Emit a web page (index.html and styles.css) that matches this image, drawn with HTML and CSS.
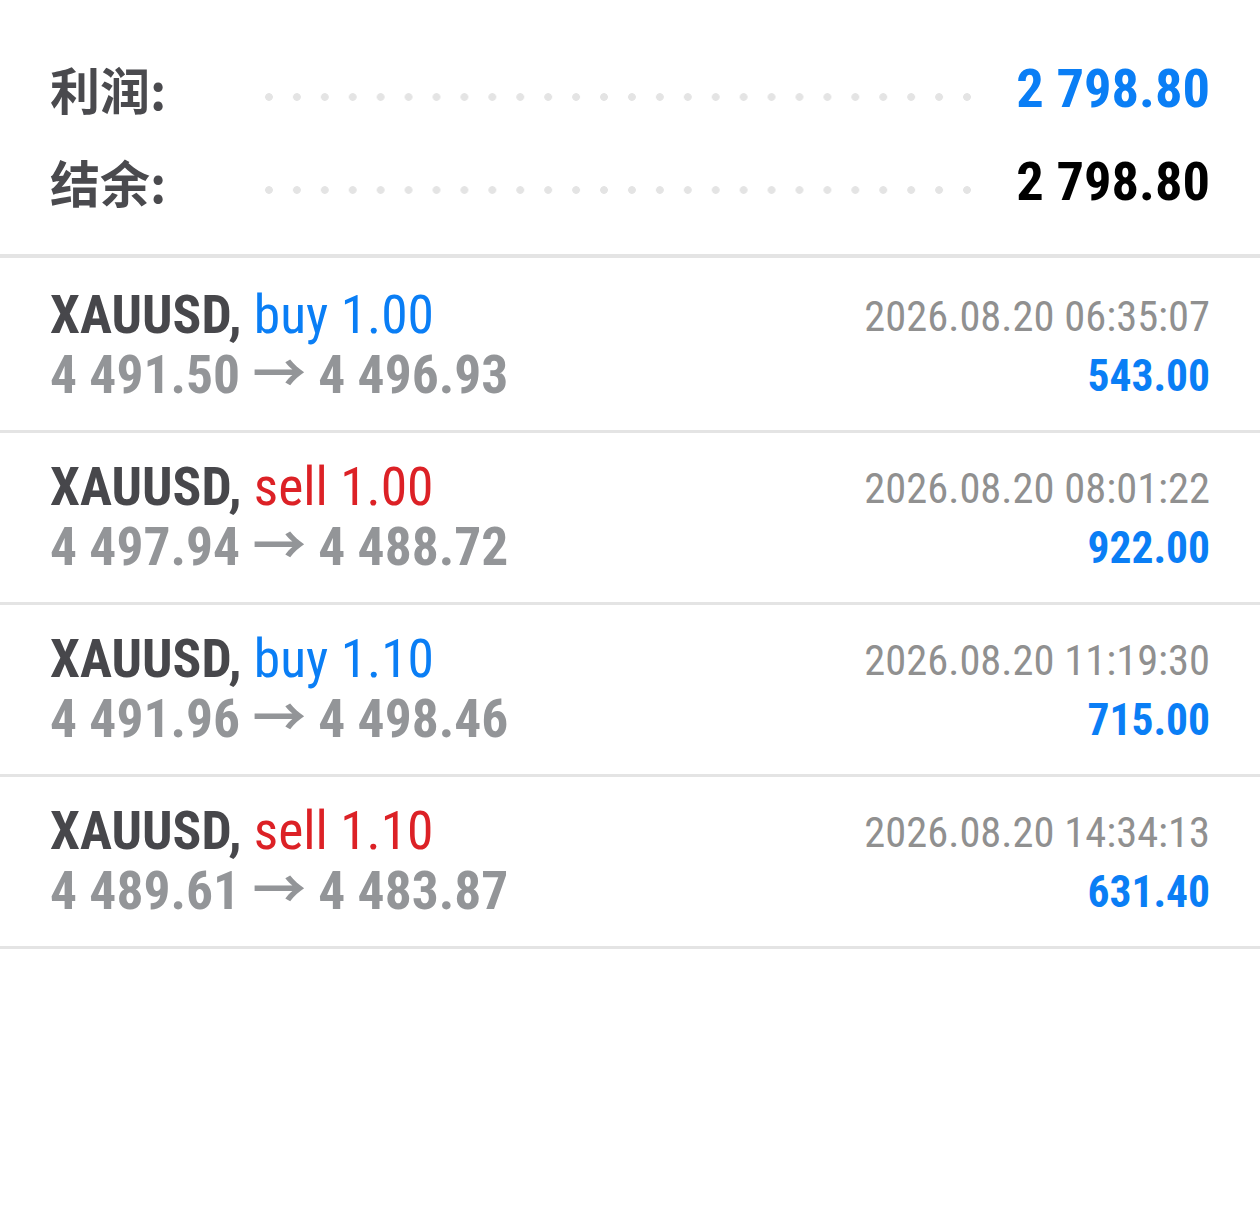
FILE: index.html
```html
<!DOCTYPE html>
<html lang="zh">
<head>
    <meta charset="UTF-8">
    <title>Trades</title>
    <link rel="stylesheet" href="styles.css">
</head>
<body>
    <section class="summary">
        <div class="sum-row">
            <span class="sum-label">利润:</span>
            <span class="dots"></span>
            <span class="sum-value blue">2 798.80</span>
        </div>
        <div class="sum-row">
            <span class="sum-label">结余:</span>
            <span class="dots"></span>
            <span class="sum-value">2 798.80</span>
        </div>
    </section>

    <ul class="trades">
        <li class="trade">
            <div class="left">
                <div class="title">XAUUSD, <span class="buy">buy 1.00</span></div>
                <div class="prices">4 491.50 → 4 496.93</div>
            </div>
            <div class="right">
                <div class="time">2026.08.20 06:35:07</div>
                <div class="profit">543.00</div>
            </div>
        </li>
        <li class="trade">
            <div class="left">
                <div class="title">XAUUSD, <span class="sell">sell 1.00</span></div>
                <div class="prices">4 497.94 → 4 488.72</div>
            </div>
            <div class="right">
                <div class="time">2026.08.20 08:01:22</div>
                <div class="profit">922.00</div>
            </div>
        </li>
        <li class="trade">
            <div class="left">
                <div class="title">XAUUSD, <span class="buy">buy 1.10</span></div>
                <div class="prices">4 491.96 → 4 498.46</div>
            </div>
            <div class="right">
                <div class="time">2026.08.20 11:19:30</div>
                <div class="profit">715.00</div>
            </div>
        </li>
        <li class="trade">
            <div class="left">
                <div class="title">XAUUSD, <span class="sell">sell 1.10</span></div>
                <div class="prices">4 489.61 → 4 483.87</div>
            </div>
            <div class="right">
                <div class="time">2026.08.20 14:34:13</div>
                <div class="profit">631.40</div>
            </div>
        </li>
    </ul>
</body>
</html>
```

FILE: styles.css
```css
body {
    margin: 0;
    background: #fff;
    font-family: "Roboto Condensed", Roboto, "Noto Sans CJK SC", sans-serif;
}

/* summary block */
.summary {
    padding: 41px 50px 27px;
    border-bottom: 4px solid #e4e4e4;
}

.sum-row {
    display: flex;
    align-items: center;
    height: 93px;
}

.sum-label {
    font-family: "Noto Sans CJK SC", sans-serif;
    font-weight: bold;
    font-size: 50px;
    line-height: 60px;
    color: #4a4a4e;
    width: 205px;
}

.dots {
    flex: 1;
    height: 8px;
    margin: 19px 35px 0 0;
    background-image: radial-gradient(circle, #e4e4e4 3.5px, transparent 4.2px);
    background-size: 28px 8px;
    background-repeat: round no-repeat;
}

.sum-value {
    font-weight: bold;
    font-size: 54.5px;
    color: #000;
}

.blue {
    color: #0a7ef5;
}

/* trade list */
.trades {
    list-style: none;
    margin: 0;
    padding: 0;
}

.trade {
    display: flex;
    justify-content: space-between;
    align-items: flex-start;
    padding: 24px 50px 25px;
    border-bottom: 3px solid #e4e4e4;
}

.trade:first-child {
    padding-top: 27px;
}

.title {
    font-size: 53.5px;
    font-weight: bold;
    color: #47474b;
    line-height: 60px;
}

.buy {
    font-weight: normal;
    color: #0a7ef5;
}

.sell {
    font-weight: normal;
    color: #dc2126;
}

.prices {
    font-size: 53.5px;
    font-weight: bold;
    color: #939598;
    line-height: 60px;
}

.right {
    text-align: right;
}

.time {
    font-size: 42.5px;
    color: #909090;
    line-height: 64px;
}

.profit {
    font-size: 43.5px;
    font-weight: bold;
    color: #0a7ef5;
    line-height: 56px;
}
```
